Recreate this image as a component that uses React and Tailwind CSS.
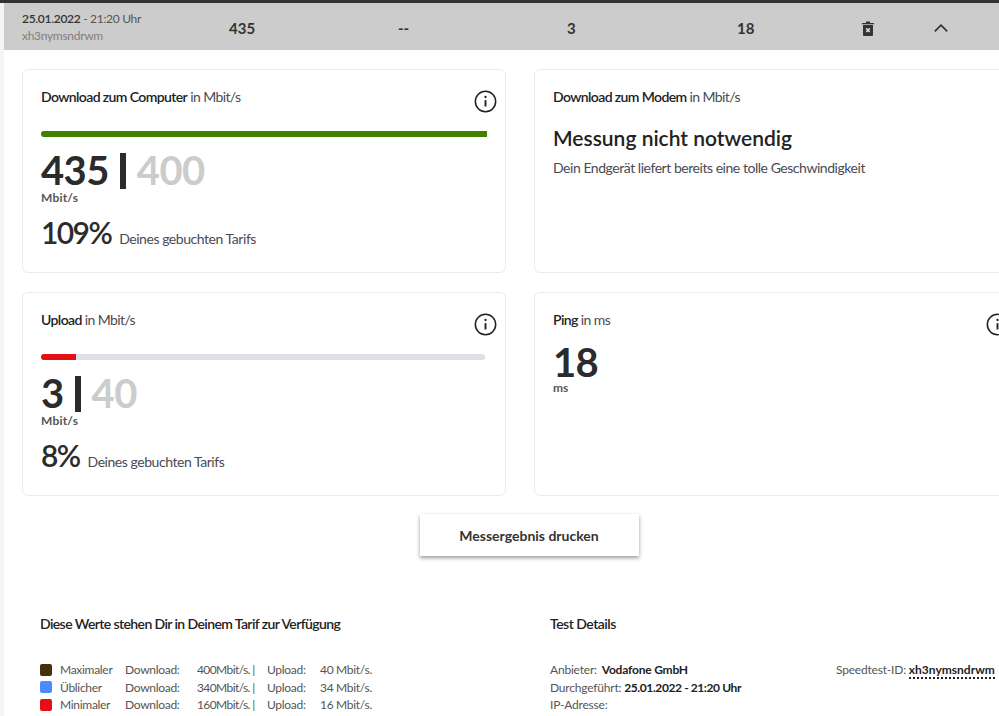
import React from 'react';

// info icon in the top right corner of a card
function InfoIcon() {
  return (
    <svg viewBox="0 0 24 24" className="absolute left-[451px] top-[20px] h-[23px] w-[23px]" fill="none" stroke="#222" strokeWidth="1.6">
      <circle cx="12" cy="12" r="10.6" />
      <path d="M12 10.6v6.6" strokeWidth="2" />
      <circle cx="12" cy="7.3" r="1.2" fill="#222" stroke="none" />
    </svg>
  );
}

function TrashIcon() {
  return (
    <svg viewBox="0 0 12 15" className="h-[15px] w-[12px]">
      <path d="M0 2h12v1.3H0zM4 .6h4V2H4z" fill="#333" />
      <path d="M1 4h10v10a1 1 0 0 1-1 1H2a1 1 0 0 1-1-1z" fill="#333" />
      <path d="M4.2 7.4l3.6 3.6M7.8 7.4l-3.6 3.6" stroke="#ddd" strokeWidth="1.5" />
    </svg>
  );
}

function Chevron() {
  return (
    <svg viewBox="0 0 14 8" className="h-[8px] w-[14px]" fill="none" stroke="#333" strokeWidth="1.7">
      <path d="M.8 7.3L7 1.2l6.2 6.1" />
    </svg>
  );
}

function Title({ bold, rest }) {
  return (
    <p className="text-[14px] leading-[18px] tracking-[-0.6px] text-[#4a4a55]">
      <span className="font-semibold text-[#222]">{bold}</span> {rest}
    </p>
  );
}

function SpeedCard({ title, value, max, percent, barWidth, barColor, trackWidth }) {
  return (
    <div className="relative h-[204px] rounded-md border border-[#e8ebf1] bg-white pl-[18px] pt-[18px]">
      <Title bold={title} rest="in Mbit/s" />
      <InfoIcon />
      <div className={`mt-[25px] h-[6px] rounded-full bg-[#dde0ea] ${trackWidth}`}>
        <div className={`h-[6px] rounded-l-full ${barColor} ${barWidth}`} />
      </div>
      <div className="mt-[13px] flex items-center text-[40px] font-bold leading-[41px] tracking-[-0.6px] text-[#2b2b2b]">
        <span>{value}</span>
        <span className="ml-[11px] h-[36px] w-[6px] bg-[#2b2b2b]" />
        <span className="ml-[11px] text-[#cccccc]">{max}</span>
      </div>
      <p className="text-[12px] font-bold leading-[14px] tracking-[0.2px] text-[#555]">Mbit/s</p>
      <div className="mt-[9px] flex items-baseline">
        <span className="text-[30px] font-semibold leading-[36px] tracking-[-1.6px] text-[#2b2b2b]">{percent}</span>
        <span className="ml-[8px] text-[14px] tracking-[-0.45px] text-[#4a4a55]">Deines gebuchten Tarifs</span>
      </div>
    </div>
  );
}

const tariffRows = [
  { color: 'bg-[#47300a]', name: 'Maximaler', down: '400Mbit/s. |', up: '40 Mbit/s.' },
  { color: 'bg-[#4a8cff]', name: 'Üblicher', down: '340Mbit/s. |', up: '34 Mbit/s.' },
  { color: 'bg-[#e60f14]', name: 'Minimaler', down: '160Mbit/s. |', up: '16 Mbit/s.' },
];

export default function App() {
  return (
    <div className="h-[716px] w-[999px] overflow-hidden bg-[#f5f5f5] font-['Lato',sans-serif] text-[#333]">
      <div className="h-[3px] bg-[#333]" />
      <div className="ml-[4px] flex h-[47px] items-center bg-[#cccccc] pl-[18px]">
        <div className="w-[207px] text-[12px] leading-[17px] tracking-[-0.3px]">
          <p><span className="font-semibold text-[#333]">25.01.2022</span> <span className="text-[#555]">- 21:20 Uhr</span></p>
          <p className="text-[#808080]">xh3nymsndrwm</p>
        </div>
        <div className="grid flex-1 grid-cols-[169px_169px_170px_125px_72px_1fr] items-center pt-[3px] text-[15px] font-bold">
          <span>435</span>
          <span>--</span>
          <span>3</span>
          <span>18</span>
          <span className="flex"><TrashIcon /></span>
          <span className="flex"><Chevron /></span>
        </div>
      </div>
      <div className="ml-[4px] h-[666px] bg-white pl-[18px]">
        <div className="grid w-[1000px] grid-cols-[484px_484px] gap-x-[28px] gap-y-[19px] pt-[19px]">
          <SpeedCard title="Download zum Computer" value="435" max="400" percent="109%" trackWidth="w-[446px]" barWidth="w-full" barColor="bg-[#428000]" />
          <div className="relative h-[204px] rounded-md border border-[#e8ebf1] bg-white pl-[18px] pt-[18px]">
            <Title bold="Download zum Modem" rest="in Mbit/s" />
            <h2 className="mt-[19px] text-[21px] font-semibold leading-[26px] text-[#222]">Messung nicht notwendig</h2>
            <p className="mt-[8px] text-[14px] leading-[18px] tracking-[-0.46px] text-[#4a4a55]">Dein Endgerät liefert bereits eine tolle Geschwindigkeit</p>
          </div>
          <SpeedCard title="Upload" value="3" max="40" percent="8%" trackWidth="w-[444px]" barWidth="w-[35px]" barColor="bg-[#e60f14]" />
          <div className="relative h-[204px] rounded-md border border-[#e8ebf1] bg-white pl-[18px] pt-[18px]">
            <Title bold="Ping" rest="in ms" />
            <InfoIcon />
            <p className="mt-[15px] text-[40px] font-bold leading-[37px] tracking-[-0.6px] text-[#2b2b2b]">18</p>
            <p className="text-[12px] font-bold leading-[14px] text-[#555]">ms</p>
          </div>
        </div>
        <div className="mt-[18px] flex justify-center pl-[37px]">
          <button className="h-[42px] w-[219px] bg-white text-[14px] font-bold text-[#333] shadow-[0_2px_4px_rgba(0,0,0,0.4)]">Messergebnis drucken</button>
        </div>
        <div className="mt-[58px] flex pl-[18px]">
          <div className="w-[510px]">
            <h3 className="text-[14px] font-semibold leading-[20px] tracking-[-0.6px] text-[#222]">Diese Werte stehen Dir in Deinem Tarif zur Verfügung</h3>
            <div className="mt-[27px] text-[12px] leading-[17.5px] tracking-[-0.3px] text-[#555]">
              {tariffRows.map((row) => (
                <div key={row.name} className="flex items-center">
                  <span className="w-[12px]"><span className={`block h-[12px] w-[12px] rounded-[2px] ${row.color}`} /></span>
                  <span className="ml-[8px] w-[65px]">{row.name}</span>
                  <span className="w-[72px]">Download:</span>
                  <span className="w-[70px] tracking-[-0.6px]">{row.down}</span>
                  <span className="w-[53px]">Upload:</span>
                  <span>{row.up}</span>
                </div>
              ))}
            </div>
          </div>
          <div className="flex-1">
            <h3 className="text-[14px] font-semibold leading-[20px] tracking-[-0.5px] text-[#222]">Test Details</h3>
            <div className="mt-[27px] flex text-[12px] leading-[17.5px] tracking-[-0.2px] text-[#555]">
              <div className="w-[286px]">
                <p>Anbieter: <b className="ml-[2px] text-[#222]">Vodafone GmbH</b></p>
                <p>Durchgeführt: <b className="tracking-[-0.4px] text-[#222]">25.01.2022 - 21:20 Uhr</b></p>
                <p>IP-Adresse:</p>
              </div>
              <p className="whitespace-nowrap tracking-[-0.2px]">Speedtest-ID: <b className="border-b-2 border-dotted border-[#222] tracking-[0px] text-[#222]">xh3nymsndrwm</b></p>
            </div>
          </div>
        </div>
      </div>
    </div>
  );
}
